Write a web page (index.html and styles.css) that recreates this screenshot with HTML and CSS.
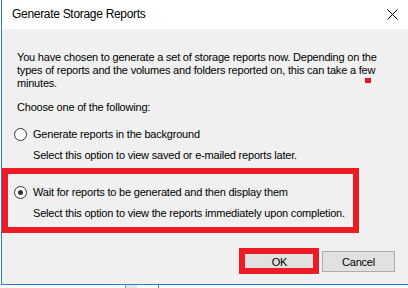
FILE: index.html
```html
<!DOCTYPE html>
<html lang="en">
<head>
    <meta charset="UTF-8">
    <meta name="viewport" content="width=device-width, initial-scale=1.0">
    <title>Generate Storage Reports</title>
    <link rel="stylesheet" href="styles.css">
</head>
<body>
    <div class="window">
        <!-- title bar -->
        <div class="titlebar">
            <span class="title">Generate Storage Reports</span>
            <svg class="close" width="11" height="11" viewBox="0 0 11 11">
                <path d="M0.5 0.5 L10.5 10.5 M10.5 0.5 L0.5 10.5" stroke="#000" stroke-width="1" fill="none"/>
            </svg>
        </div>

        <!-- dialog content -->
        <div class="content">
            <p class="intro">You have chosen to generate a set of storage reports now. Depending on the<br>types of reports and the volumes and folders reported on, this can take a few<br>minutes.</p>
            <span class="marker"></span>

            <p class="choose">Choose one of the following:</p>

            <div class="option" id="option-background">
                <label class="radio-row"><span class="radio"></span>Generate reports in the background</label>
                <div class="hint">Select this option to view saved or e-mailed reports later.</div>
            </div>

            <div class="option option-wait" id="option-wait">
                <label class="radio-row"><span class="radio checked"></span>Wait for reports to be generated and then display them</label>
                <div class="hint">Select this option to view the reports immediately upon completion.</div>
                <div class="highlight"></div>
            </div>

            <div class="buttons">
                <div class="btn-wrap">
                    <button type="button" class="btn btn-default">OK</button>
                    <div class="highlight"></div>
                </div>
                <button type="button" class="btn">Cancel</button>
            </div>
        </div>
    </div>
    <div class="below">
        <span class="below-a"></span>
        <span class="below-b"></span>
    </div>
</body>
</html>
```

FILE: styles.css
```css
body{
    margin: 0;
    background-color: #ffffff;
    font-family: "Liberation Sans", Arial, sans-serif;
    font-size: 11px;
    letter-spacing: -0.2px;
    color: #000000;
}
.window{
    margin-left: 1px;
    width: 407px;
    height: 285px;
    border-left: 1px solid #2b7cd3;
    border-bottom: 1px solid #2b7cd3;
    display: flex;
    flex-direction: column;
    box-sizing: border-box;
}
.titlebar{
    height: 29px;
    background-color: #ffffff;
    display: flex;
    align-items: center;
    padding-left: 10px;
    padding-right: 10px;
    flex-shrink: 0;
}
.title{
    font-size: 12px;
    letter-spacing: -0.3px;
    flex: 1;
    padding-bottom: 2px;
}
.close{
    margin-bottom: 1px;
}
.content{
    flex: 1;
    background-color: #f0f0f0;
    padding: 22px 0 0 15px;
    position: relative;
    line-height: 13px;
    white-space: nowrap;
}
.content p{
    margin: 0;
}
.marker{
    position: absolute;
    left: 363px;
    top: 49px;
    width: 6px;
    height: 5px;
    background-color: #e81123;
}
.choose{
    margin-top: 11px !important;
}
.option{
    position: relative;
    margin-top: 14px;
}
.option-wait{
    margin-top: 24px;
}
.radio-row{
    display: flex;
    align-items: center;
    margin-left: -3px;
}
.radio{
    width: 11px;
    height: 11px;
    border: 1px solid #333333;
    border-radius: 50%;
    background-color: #ffffff;
    margin-right: 6px;
    box-sizing: content-box;
    position: relative;
}
.radio.checked::after{
    content: "";
    position: absolute;
    left: 3px;
    top: 3px;
    width: 5px;
    height: 5px;
    border-radius: 50%;
    background-color: #333333;
}
.hint{
    margin-top: 8px;
    padding-left: 16px;
}
.highlight{
    position: absolute;
    border: 6px solid #ed1c24;
}
.option-wait .highlight{
    left: -15px;
    top: -18px;
    width: 345px;
    height: 53px;
}
.buttons{
    display: flex;
    justify-content: flex-end;
    gap: 6px;
    padding-right: 13px;
    margin-top: 31px;
}
.btn-wrap{
    position: relative;
}
.btn-wrap .highlight{
    left: -4px;
    top: -3px;
    width: 68px;
    height: 14px;
}
.btn{
    width: 73px;
    height: 21px;
    font-family: "Liberation Sans", Arial, sans-serif;
    font-size: 11px;
    letter-spacing: -0.2px;
    background-color: #e1e1e1;
    border: 1px solid #adadad;
    padding: 0;
    color: #000000;
}
.btn-default{
    border: 2px solid #0078d7;
}
.below{
    height: 3px;
    position: relative;
}
.below-a{
    position: absolute;
    left: 125px;
    width: 11px;
    height: 3px;
    border-left: 1px solid #9a9a9a;
    background-color: #e6e6e6;
}
.below-b{
    position: absolute;
    left: 158px;
    width: 1px;
    height: 3px;
    background-color: #6a6a6a;
}
```
